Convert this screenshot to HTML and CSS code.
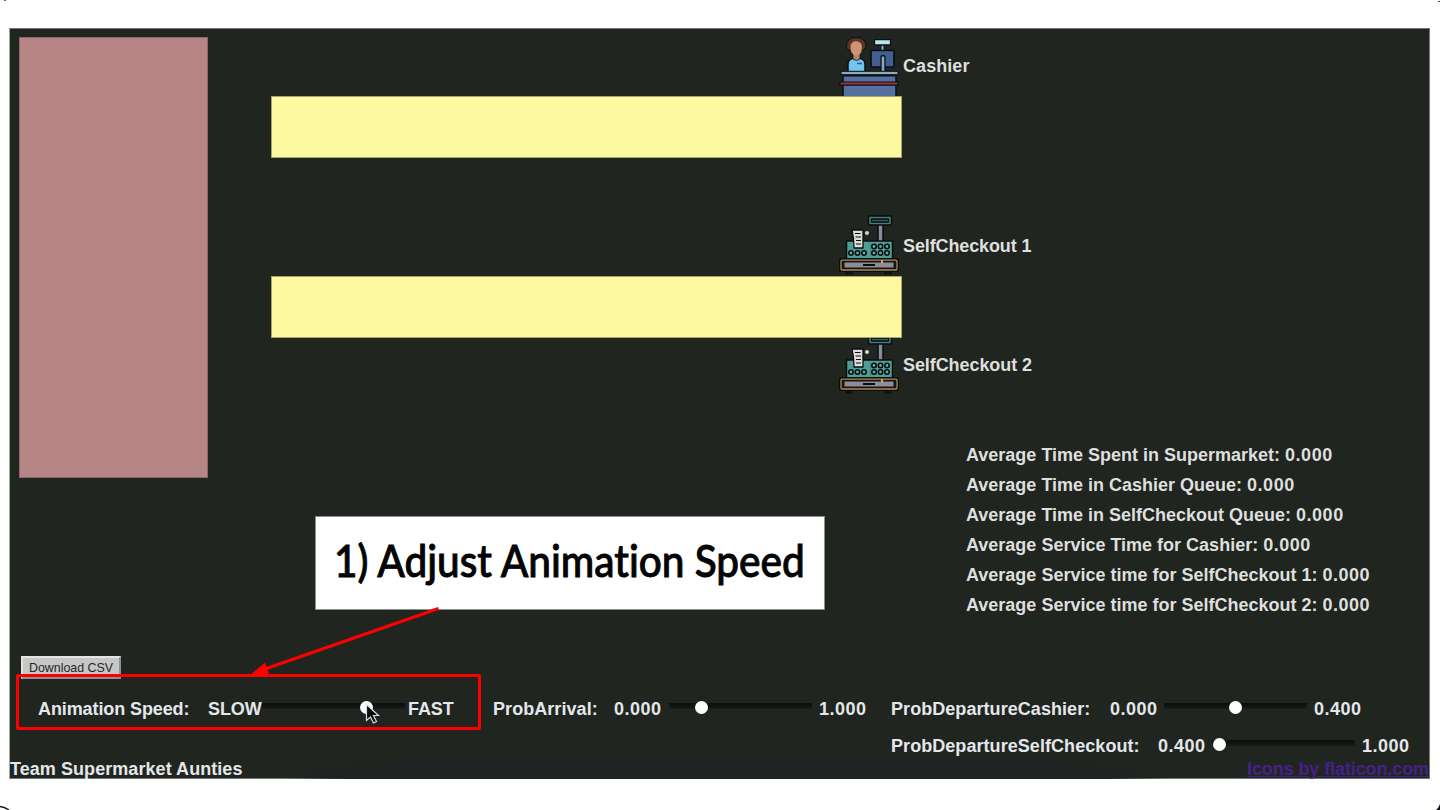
FILE: index.html
```html
<!DOCTYPE html>
<html lang="en">
<head>
<meta charset="utf-8">
<title>Team Supermarket Aunties</title>
<link rel="stylesheet" href="styles.css">
</head>
<body>
<svg class="defs" width="0" height="0">
  <defs>
    <symbol id="register" viewBox="0 0 60 62">
      <g stroke="#080d0d" stroke-linejoin="round">
        <path d="M39 10h5v18h-5z" fill="#8c8b98" stroke-width="1.5"/>
        <rect x="29.500" y="2" width="23" height="9" rx="1.500" fill="#467b7c" stroke-width="1.500"/>
        <path d="M32.500 5h17v3h-17z" fill="#385e62" stroke-width="1.300"/>
        <path d="M7.500 27h46v18h-46z" fill="#4e9d99" stroke-width="1.500"/>
        <path d="M13 16h11v18H15q0-10-2-18z" fill="#dededc" stroke-width="1.300"/>
        <path d="M16 19.500h5.500M16.500 23h5.500M17 26.500h5M17 30h5" fill="none" stroke-width="1"/>
        <circle cx="28" cy="19" r="2.300" fill="#d7d7d7" stroke-width=".5"/>
        <g fill="#69a9a4" stroke-width="1.600">
          <circle cx="12" cy="39" r="2.200"/><circle cx="18.500" cy="39" r="2.200"/><circle cx="25" cy="39" r="2.200"/>
          <circle cx="35" cy="32.500" r="2.200"/><circle cx="41.500" cy="32.500" r="2.200"/><circle cx="48" cy="32.500" r="2.200"/>
          <circle cx="35" cy="39" r="2.200"/><circle cx="41.500" cy="39" r="2.200"/><circle cx="48" cy="39" r="2.200"/>
        </g>
        <path d="M31.500 29v14" fill="none" stroke="#438480" stroke-width="1"/>
        <path d="M7 56v4h6v-4M46 56v4h6v-4" fill="#17130d" stroke-width="1"/>
        <rect x=".5" y="44.500" width="59" height="13" rx="1" fill="#080d0d" stroke-width="1"/>
        <rect x="2" y="46.200" width="56" height="9.800" rx="1" fill="#17150f" stroke="#ab8b55" stroke-width="1.300"/>
        <path d="M5.500 48.500h49v5h-49z" fill="#908b9c" stroke="none"/>
        <path d="M24 51h12" stroke-width="2"/>
        <path d="M43 46v3.500" stroke="#d1a95d" stroke-width="2"/>
      </g>
    </symbol>
  </defs>
</svg>
<main class="panel">
  <div class="scene">
    <div class="store"></div>
    <div class="floor">
      <div class="station">
        <svg class="station-icon" viewBox="0 0 60 62">
          <g stroke="#071018" stroke-linejoin="round">
            <path d="M42 7h3v8h-3z" fill="#9db5c0"/>
            <rect x="35.500" y="2.700" width="16" height="5.300" fill="#b9e8ec" stroke-width="1.300"/>
            <rect x="32" y="13.500" width="23" height="16.500" rx="1" fill="#425f91" stroke-width="1.700"/>
            <path d="M42 35V21q0-2.500 2-2.500t2 2.500v14" fill="#8ea6b5" stroke-width="1.300"/>
            <path d="M9 35V27q0-6 8.500-6t8.500 6v8z" fill="#74c4ed" stroke-width="1.500"/>
            <path d="M14 16v6q3.500 3 7 0v-6z" fill="#ba8069" stroke-width=".8"/>
            <path d="M7.500 10Q7 .5 17 .5t10 9.500l-2.500 3.500H10z" fill="#5a3527" stroke-width="1"/>
            <path d="M11.500 10q0-5 5.500-6 6 1 6 6 0 8-5.500 9-6-1-6-9z" fill="#cf9376" stroke="none"/>
            <path d="M18 26.500h5" stroke="#345b8f" stroke-width="1.500"/>
            <path d="M4 38h53v22H4z" fill="#53709f" stroke-width="1.500"/>
            <path d="M2 34.300h57v3.400H2z" fill="#95a9af" stroke-width="1"/>
            <path d="M5 38.700h51" stroke-width="1.500"/>
            <path d="M1 45h58v3.200H1z" fill="#a03039" stroke-width="1.200"/>
          </g>
        </svg>
        <span class="station-name">Cashier</span>
      </div>
      <div class="queue"></div>
      <div class="station station-self">
        <svg class="station-icon"><use href="#register"/></svg>
        <span class="station-name">SelfCheckout 1</span>
      </div>
      <div class="queue"></div>
      <div class="station station-tucked">
        <svg class="station-icon"><use href="#register"/></svg>
        <span class="station-name">SelfCheckout 2</span>
      </div>
      <div class="stats">
        <div>Average Time Spent in Supermarket: <span class="value">0.000</span></div>
        <div>Average Time in Cashier Queue: <span class="value">0.000</span></div>
        <div>Average Time in SelfCheckout Queue: <span class="value">0.000</span></div>
        <div>Average Service Time for Cashier: <span class="value">0.000</span></div>
        <div>Average Service time for SelfCheckout 1: <span class="value">0.000</span></div>
        <div>Average Service time for SelfCheckout 2: <span class="value">0.000</span></div>
      </div>
    </div>
  </div>
  <button class="download">Download CSV</button>
  <div class="controls">
    <div class="control speed"><span class="label">Animation Speed:</span><span class="min">SLOW</span><span class="track"><i class="thumb" style="margin-left:98px"></i></span><span>FAST</span></div>
    <div class="control arrival"><span class="label">ProbArrival:</span><span class="min value">0.000</span><span class="track"><i class="thumb" style="margin-left:26px"></i></span><span class="value">1.000</span></div>
    <div class="departures">
      <div class="control cashier"><span class="label">ProbDepartureCashier:</span><span class="min value">0.000</span><span class="track"><i class="thumb" style="margin-left:65px"></i></span><span class="value">0.400</span></div>
      <div class="control selfcheck"><span class="label">ProbDepartureSelfCheckout:</span><span class="min value">0.400</span><span class="track"><i class="thumb" style="margin-left:1px"></i></span><span class="value">1.000</span></div>
    </div>
  </div>
  <footer class="footer"><span>Team Supermarket Aunties</span><a class="credit">Icons by flaticon.com</a></footer>
</main>
<div class="callout"><span class="callout-text">1) Adjust Animation Speed</span></div>
<svg class="annotation" viewBox="0 0 1440 810">
  <path d="M0 806.500Q5 807 9 810" fill="none" stroke="#10131f" stroke-width="1.500"/>
  <path d="M1440 804v6h-4q2.500-2 4-6z" fill="#10131f"/>
  <path d="M4 0h2v1H4z" fill="#8b5a4a"/>
  <path d="M1438 1h2v1h-2z" fill="#444"/>
  <rect x="17.500" y="675.500" width="462" height="53" rx="1" fill="none" stroke="#f00" stroke-width="3"/>
  <path d="M438.500 608.500L265 669" stroke="#f00" stroke-width="3"/>
  <path d="M250 675l15-12.500 4.500 12.500z" fill="#f00"/>
  <path d="M366.500 704.500v16l4-3.500 3 6 3-1.500-3-6h5z" fill="#080a09" stroke="#d9dce0" stroke-width="1.200"/>
</svg>
</body>
</html>
```
FILE: styles.css
```css
* { box-sizing: border-box; }
body {
  margin: 0;
  height: 810px;
  overflow: hidden;
  background: #fff;
  font-family: "Liberation Sans", Arial, sans-serif;
}
.defs { position: absolute; }
.panel {
  width: 1421px;
  height: 751px;
  margin: 28px 0 0 9px;
  padding: 8px 0 0 9px;
  display: flex;
  flex-direction: column;
  background: #212520;
  border: 1px solid #737773;
  border-left-color: #a4a8a5;
  font-size: 18px;
  font-weight: bold;
  letter-spacing: 0.06px;
  color: #dedfde;
  white-space: nowrap;
}
.value { letter-spacing: 0.5px; }
.scene { display: flex; height: 583px; flex: none; }
.store {
  width: 189px;
  height: 441px;
  background: #b68586;
  border: 1px solid #896765;
}
.floor { margin-left: 63px; display: flex; flex-direction: column; }
.station {
  height: 59px;
  display: flex;
  align-items: center;
  padding-left: 568px;
}
.station-self { margin-top: 56px; height: 62px; letter-spacing: -0.12px; }
.station-tucked { margin-top: -5px; height: 62px; letter-spacing: -0.08px; }
.station-icon { width: 60px; height: 62px; flex: none; align-self: flex-start; }
.station-name { margin-left: 4px; }
.station-self .station-name,
.station-tucked .station-name { padding-top: 2px; }
.queue {
  position: relative;
  width: 631px;
  height: 62px;
  background: #fcf9a0;
  border: 1px solid #aaa66b;
  flex: none;
}
.stats { margin: 46px 0 0 695px; line-height: 29.9px; letter-spacing: 0; }
.download {
  width: 100px;
  height: 23px;
  margin: 36px 0 0 2px;
  padding: 0;
  background: #c7c7c7;
  border: 2px outset #e4e4e4;
  border-radius: 0;
  font: 12.4px "Liberation Sans", Arial, sans-serif;
  color: #252525;
  flex: none;
}
.controls { display: flex; margin-top: 18px; padding-left: 19px; color: #e4e7eb; }
.control { display: flex; align-items: center; height: 24px; }
.speed { width: 455px; letter-spacing: -0.1px; }
.arrival { width: 398px; }
.departures { display: flex; flex-direction: column; gap: 13px; }
.speed .label { width: 170px; }
.speed .min { width: 54px; }
.speed .track { margin-right: 3px; }
.arrival .label { width: 121px; }
.cashier .label { width: 219px; }
.selfcheck .label { width: 267px; }
.min { width: 55px; }
.departures .min { width: 54px; }
.track {
  display: flex;
  align-items: center;
  width: 143px;
  height: 6px;
  margin: -6px 7px 0 0;
  background: linear-gradient(#0b0e0d, #121512 65%, #1b1f1b);
}
.thumb {
  width: 13px;
  height: 13px;
  border-radius: 50%;
  background: #fff;
  position: relative;
  top: 1px;
}
.footer {
  display: flex;
  justify-content: space-between;
  margin: 1px 0 0 -9px;
  height: 20px;
  line-height: 21px;
  color: #e4e7eb;
  background: radial-gradient(ellipse 470px 60px at 716px 40px, #1e2222 88%, transparent 100%);
}
.credit { color: #46208a; text-decoration: underline; letter-spacing: -0.1px; }
.callout {
  position: absolute;
  left: 315px;
  top: 516px;
  width: 510px;
  height: 94px;
  padding-left: 18px;
  background: #fff;
  border: 1px solid #8c8f8c;
  line-height: 86px;
}
.callout-text {
  display: inline-block;
  transform: scaleX(0.9);
  transform-origin: 0 50%;
  font-family: Lato, sans-serif;
  font-size: 45px;
  font-weight: 500;
  font-variant-ligatures: none;
  -webkit-text-stroke: 0.9px #000;
  color: #050505;
  white-space: nowrap;
}
.annotation { position: absolute; left: 0; top: 0; width: 1440px; height: 810px; pointer-events: none; }
```
